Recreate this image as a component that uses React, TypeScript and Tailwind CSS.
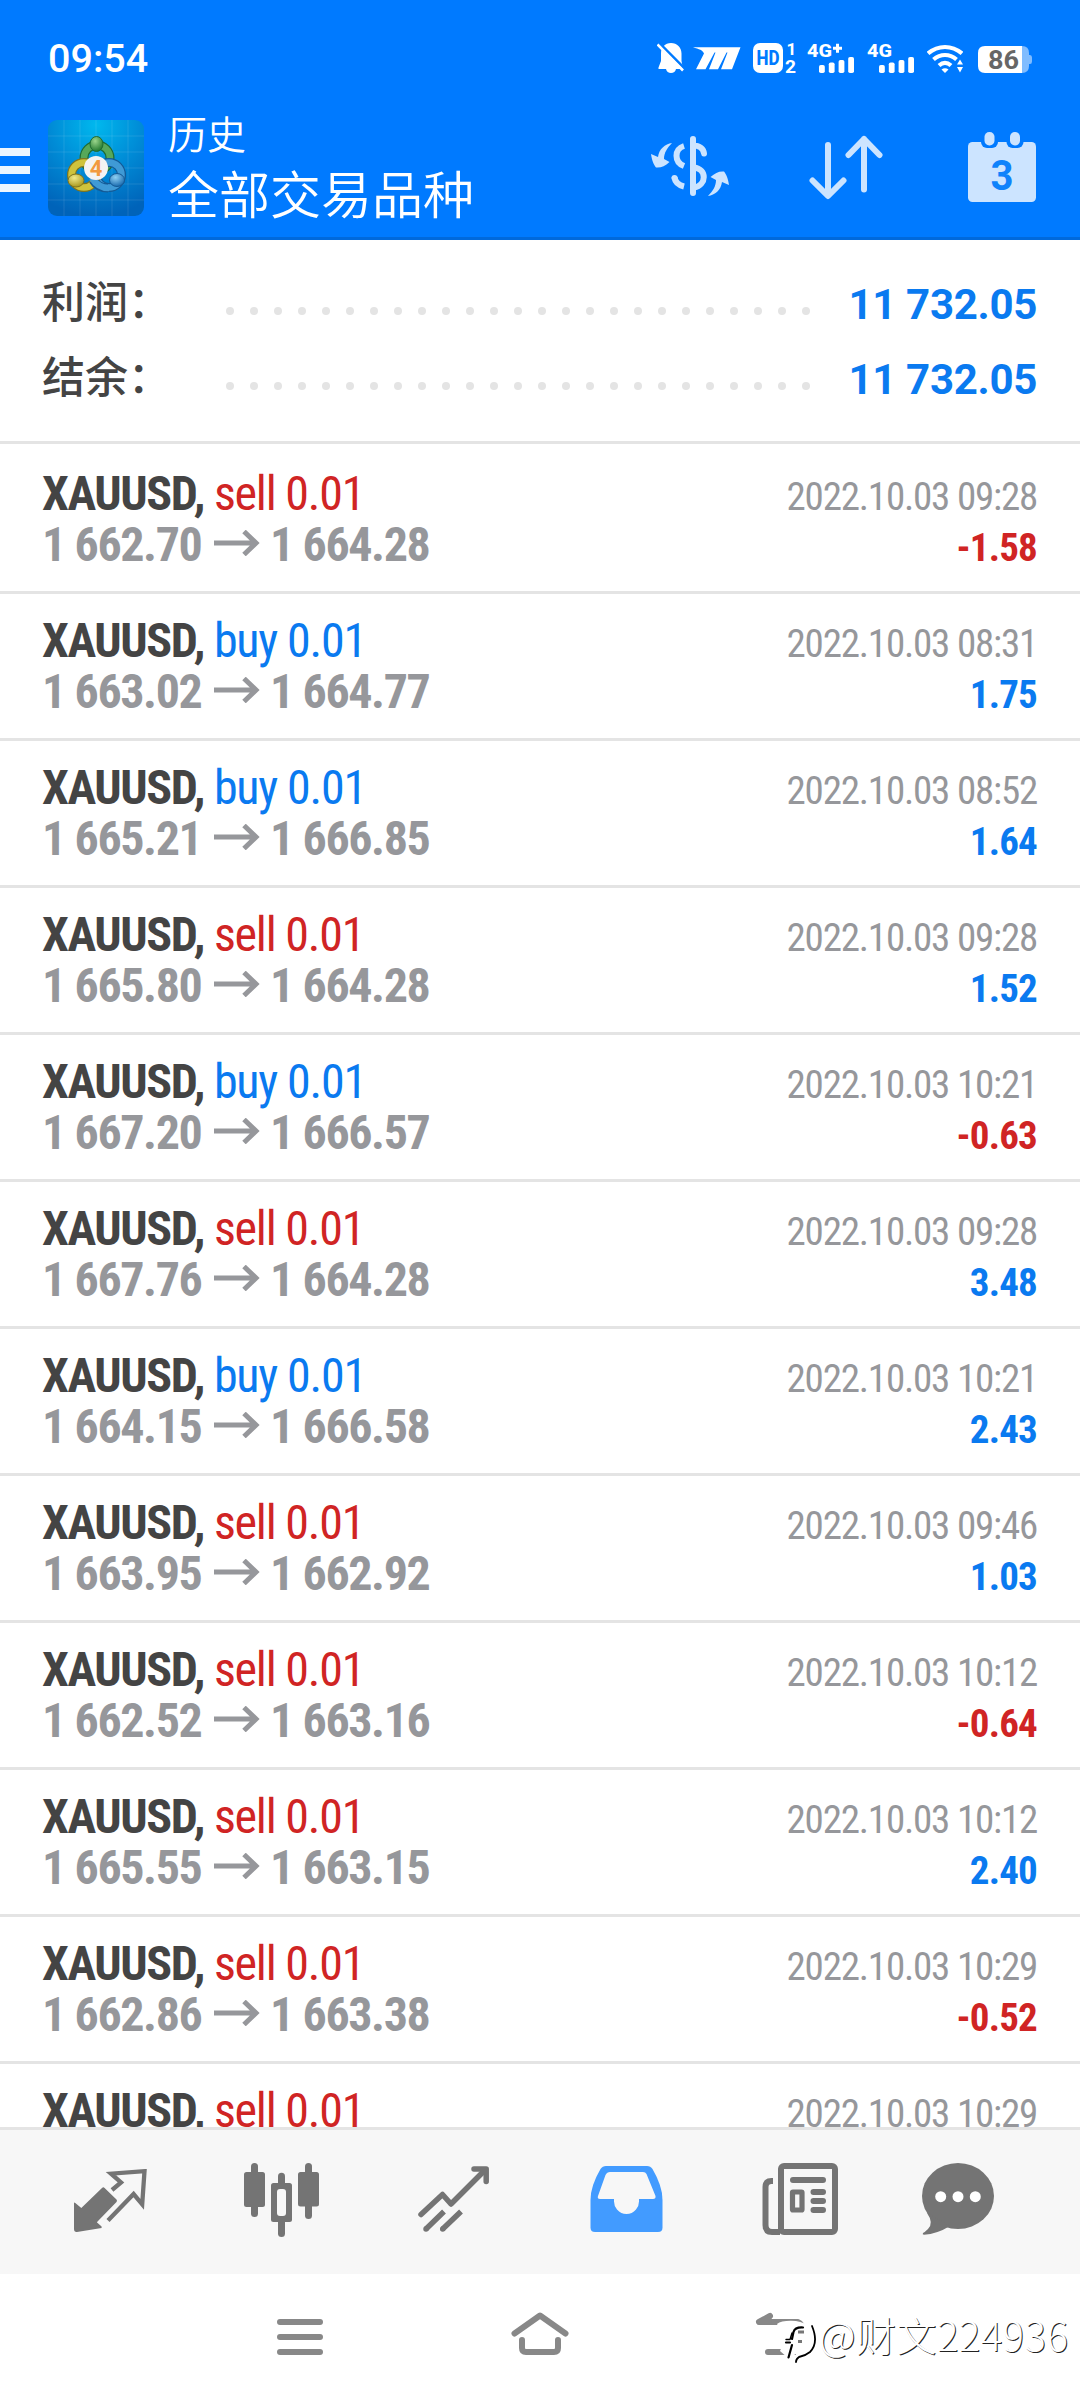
import clsx from "clsx";

type Deal = {
  side: "buy" | "sell";
  open: string;
  close: string;
  time: string;
  profit: string;
};

const DEALS: Deal[] = [
  { side: "sell", open: "1 662.70", close: "1 664.28", time: "2022.10.03 09:28", profit: "-1.58" },
  { side: "buy", open: "1 663.02", close: "1 664.77", time: "2022.10.03 08:31", profit: "1.75" },
  { side: "buy", open: "1 665.21", close: "1 666.85", time: "2022.10.03 08:52", profit: "1.64" },
  { side: "sell", open: "1 665.80", close: "1 664.28", time: "2022.10.03 09:28", profit: "1.52" },
  { side: "buy", open: "1 667.20", close: "1 666.57", time: "2022.10.03 10:21", profit: "-0.63" },
  { side: "sell", open: "1 667.76", close: "1 664.28", time: "2022.10.03 09:28", profit: "3.48" },
  { side: "buy", open: "1 664.15", close: "1 666.58", time: "2022.10.03 10:21", profit: "2.43" },
  { side: "sell", open: "1 663.95", close: "1 662.92", time: "2022.10.03 09:46", profit: "1.03" },
  { side: "sell", open: "1 662.52", close: "1 663.16", time: "2022.10.03 10:12", profit: "-0.64" },
  { side: "sell", open: "1 665.55", close: "1 663.15", time: "2022.10.03 10:12", profit: "2.40" },
  { side: "sell", open: "1 662.86", close: "1 663.38", time: "2022.10.03 10:29", profit: "-0.52" },
  { side: "sell", open: "", close: "", time: "2022.10.03 10:29", profit: "" },
];

function Signal({ label, plus }: { label: string; plus?: boolean }) {
  return (
    <svg className="overflow-visible" width="48" height="30" viewBox="0 0 48 30" fill="white">
      <text x="0" y="14" fontSize="19" fontWeight="800" textLength="25" lengthAdjust="spacingAndGlyphs">
        {label}
      </text>
      {plus && <path d="M26 5.2h9M30.5 .7v9" stroke="white" strokeWidth="3" />}
      <rect x="12" y="22" width="5.8" height="8" rx="1.8" />
      <rect x="21.8" y="19.4" width="5.8" height="10.6" rx="1.8" />
      <rect x="31.6" y="17" width="5.8" height="13" rx="1.8" />
      <rect x="41.2" y="14" width="5.8" height="16" rx="1.8" />
    </svg>
  );
}

function StatusBar() {
  return (
    <div className="flex h-[75px] justify-between pt-[43px] pr-[48px] pl-[48px] text-white">
      <div className="-mt-[6px] text-[39.5px] leading-[44px] font-medium">09:54</div>
      <div className="flex">
        {/* 静音 */}
        <svg width="27" height="30" viewBox="0 0 27 30" fill="white">
          <path d="M14 0C8 0 4 4.5 4 10.5V18L1.5 24.5V26H9C9.5 28.5 11.5 30 14 30S18.500 28.500 19 26H26L24.500 18V10.500C24.500 4.500 20 0 14 0Z" />
          <path d="M-1 -3L30 28" stroke="#007aff" strokeWidth="3" />
          <path d="M.5 1.500L26 27.500" stroke="white" strokeWidth="2.600" />
        </svg>
        <svg className="ml-[9px]" width="48" height="30" viewBox="0 0 48 30" fill="white">
          <path d="M0 4.300H47.500L39 26.300H28L34.500 9.500H33.500L25 26.300H16L22.500 9.500H21.500L12.500 26.300H3L11 10.500C10 7.500 6 6 0 4.300Z" />
        </svg>
        <svg className="ml-[12px] overflow-visible" width="42" height="30" viewBox="0 0 42 30" fill="white">
          <rect width="30" height="30" rx="7" />
          <text x="3.500" y="21.800" fontSize="19.500" fontWeight="800" fill="#007aff" textLength="23" lengthAdjust="spacingAndGlyphs">HD</text>
          <text x="33.500" y="11.700" fontSize="17" fontWeight="700">1</text>
          <text x="32" y="29.800" fontSize="18" fontWeight="700" textLength="11" lengthAdjust="spacingAndGlyphs">2</text>
        </svg>
        <div className="ml-[12px]">
          <Signal label="4G" plus />
        </div>
        <div className="ml-[12px]">
          <Signal label="4G" />
        </div>
        <svg className="ml-[12px]" width="36" height="30" viewBox="0 0 36 30" fill="none" stroke="white" strokeWidth="4.200">
          <path d="M1 10.500C11 1.800 25 1.800 35 10.500" />
          <path d="M6.500 16.500C13.500 10.500 22.500 10.500 29.500 16.500" />
          <path d="M12 22.500C16 19 20 19 24 22.500" />
          <path d="M14.500 26.500Q18 23.800 21.500 26.500L18 30Z" fill="white" stroke="none" />
          <path d="M33 16.500L36 21.500H30ZM33 29.500L36 24H30Z" fill="white" stroke="none" />
        </svg>
        <svg className="ml-[15px]" width="54" height="30" viewBox="0 0 54 30">
          <path d="M43.500 3H44Q51 3 51 10V12H52Q54 12 54 14.500V18.500Q54 21 52 21H51V23Q51 30 44 30H43.500Z" fill="#80bcff" />
          <path d="M44 3H7Q0 3 0 10V23Q0 30 7 30H44Z" fill="white" />
          <text x="10" y="25.600" fontSize="25" fontWeight="700" fill="#666" textLength="31" lengthAdjust="spacingAndGlyphs">86</text>
        </svg>
      </div>
    </div>
  );
}

function AppLogo() {
  return (
    <svg width="96" height="96" viewBox="0 0 96 96">
      <defs>
        <radialGradient id="tile" cx="50%" cy="5%" r="95%">
          <stop offset="0" stopColor="#00b8ee" />
          <stop offset="0.5" stopColor="#008bd6" />
          <stop offset="1" stopColor="#0063b9" />
        </radialGradient>
        <radialGradient id="green" cx="40%" cy="30%" r="70%">
          <stop offset="0" stopColor="#9bd68c" />
          <stop offset="1" stopColor="#23792f" />
        </radialGradient>
        <radialGradient id="yellow" cx="40%" cy="30%" r="70%">
          <stop offset="0" stopColor="#f1ea8a" />
          <stop offset="1" stopColor="#a8981f" />
        </radialGradient>
        <radialGradient id="blue" cx="40%" cy="30%" r="70%">
          <stop offset="0" stopColor="#8fd0f3" />
          <stop offset="1" stopColor="#1b6cb0" />
        </radialGradient>
      </defs>
      <rect width="96" height="96" rx="9" fill="url(#tile)" />
      <path
        d="M16 0V96M32 0V96M48 0V96M64 0V96M80 0V96M0 16H96M0 32H96M0 48H96M0 64H96M0 80H96"
        stroke="white"
        strokeOpacity="0.1"
      />
      <g fill="none">
        <circle cx="49" cy="38" r="13" stroke="#1f6b33" strokeWidth="9" />
        <circle cx="49" cy="38" r="13" stroke="#56a85a" strokeWidth="6.500" />
        <circle cx="61" cy="55" r="12.500" stroke="#145a96" strokeWidth="9" />
        <circle cx="61" cy="55" r="12.500" stroke="#3f9ad6" strokeWidth="6.500" />
        <circle cx="36" cy="55" r="12.500" stroke="#80741c" strokeWidth="9" />
        <circle cx="36" cy="55" r="12.500" stroke="#cfc33c" strokeWidth="6.500" />
        <path d="M45 60Q50 68 60 68" stroke="#145a96" strokeWidth="9" />
        <path d="M44 58Q50 68 61 68" stroke="#3f9ad6" strokeWidth="6.500" />
      </g>
      <ellipse cx="48.500" cy="24" rx="6.500" ry="7.500" fill="url(#green)" stroke="#1f6b33" />
      <ellipse cx="28" cy="60.500" rx="8" ry="6.500" fill="url(#yellow)" stroke="#80741c" />
      <ellipse cx="69" cy="60" rx="7.500" ry="6.500" fill="url(#blue)" stroke="#145a96" />
      <circle cx="48" cy="48" r="12" fill="#f4f3f2" />
      <text x="48" y="56" textAnchor="middle" fontSize="22" fontWeight="700" fill="#f29a3e">4</text>
    </svg>
  );
}

function Header() {
  return (
    <header className="h-[240px] border-b-[3px] border-[#0069dc] bg-[#007aff]">
      <StatusBar />
      <div className="flex text-white">
        <div className="mt-[73px] flex w-[30px] flex-col gap-[10px]">
          <div className="h-[8px] bg-[#edf6ff]" />
          <div className="h-[8px] bg-[#edf6ff]" />
          <div className="h-[8px] bg-[#edf6ff]" />
        </div>
        <div className="mt-[45px] ml-[18px]">
          <AppLogo />
        </div>
        <div className="mt-[33px] ml-[24px] font-['Noto_Sans_CJK_SC',sans-serif] font-[350]">
          <div className="text-[39px] leading-[48px]">历史</div>
          <div className="mt-[6px] text-[51px] leading-[60px]">全部交易品种</div>
        </div>
        <div className="ml-auto flex pr-[44px]">
          <svg className="mt-[45px]" width="110" height="90" viewBox="0 0 110 90" fill="none" stroke="#cce4ff" strokeWidth="6">
            <path d="M53 19V73M53 25.500C60 25.500 63.500 29 64 33.500" strokeLinecap="round" />
            <path d="M54 47.500C67 49 67 65 54 67.500" />
            <path d="M44 26C34 29 34 42 44 46M34.500 57C35 62 38 65 44 66.500" />
            <g fill="#cce4ff" stroke="none">
              <circle cx="34.500" cy="58" r="3" />
              <path d="M32 23C25 24 19 29 18 37L11 34C12 41 14 45 16 47.500C21 48 25 46 29.500 42L24 39C24 33 27 28 32 23Z" />
              <path d="M68 76C75 75 81 70 82 62L89 65C88 58 86 54 84 51.500C79 51 75 53 70.500 57L76 60C76 66 73 71 68 76Z" />
            </g>
          </svg>
          <svg
            className="mt-[60px] ml-[59px]"
            width="74"
            height="66"
            viewBox="0 0 74 66"
            fill="none"
            stroke="#cce4ff"
            strokeWidth="6"
            strokeLinecap="round"
            strokeLinejoin="round"
          >
            <path d="M19 10V60M3.500 45.500L19 61L34.500 45.500" />
            <path d="M55 54.500V4M39.500 20L55 4L70.500 20" />
          </svg>
          <svg className="mt-[57px] ml-[85px]" width="68" height="70" viewBox="0 0 68 70" fill="#cce4ff">
            <rect y="10" width="68" height="60" rx="4.500" />
            <rect x="13" y="4" width="17" height="12" rx="6" fill="#007aff" />
            <rect x="38.500" y="4" width="17" height="12" rx="6" fill="#007aff" />
            <rect x="16.500" width="10" height="13.500" rx="4.800" />
            <rect x="42" width="10" height="13.500" rx="4.800" />
            <text x="22.500" y="57.500" fontSize="43" fontWeight="700" fill="#0f82fb" textLength="23" lengthAdjust="spacingAndGlyphs">3</text>
          </svg>
        </div>
      </div>
    </header>
  );
}

function SummaryRow({ label, value }: { label: string; value: string }) {
  return (
    <div className="flex h-[75px] items-center pr-[43px] pl-[42px]">
      <div className="-mt-[6px] w-[184px] font-['Noto_Sans_CJK_SC',sans-serif] text-[43px] font-medium text-[#444]">{label}</div>
      <div className="mt-[16px] flex gap-[16px]">
        {Array.from({ length: 25 }, (_, i) => (
          <div key={i} className="size-[8px] rounded-full bg-[#e4e4e4]" />
        ))}
      </div>
      <div className="mt-[3px] ml-auto text-[42px] font-bold tracking-[-0.3px] text-[#0a7af0]">{value}</div>
    </div>
  );
}

function DealRow({ deal, first }: { deal: Deal; first: boolean }) {
  const loss = deal.profit.startsWith("-");
  return (
    <div
      className={clsx(
        "shrink-0 border-b-[3px] border-[#e4e4e4] pr-[43px] pl-[42px] tracking-[-1.2px] font-stretch-75%",
        first ? "h-[150px] pt-[24px]" : "h-[147px] pt-[21px]",
      )}
    >
      <div className="flex h-[51px] items-baseline justify-between leading-[51px]">
        <div className="text-[48px]">
          <span className="font-bold tracking-[-1.4px] text-[#444]">XAUUSD,</span>{" "}
          <span className={deal.side === "buy" ? "text-[#0a7af0]" : "text-[#d02424]"}>{deal.side} 0.01</span>
        </div>
        <div className="text-[39px] text-[#96979b]">{deal.time}</div>
      </div>
      <div className="flex h-[51px] items-baseline justify-between leading-[51px] font-bold">
        <div className="flex text-[48px] tracking-[-1.4px] text-[#96979b]">
          <span className="w-[172px]">{deal.open}</span>
          <svg className="mt-[11px]" width="46" height="26" viewBox="0 0 46 26" fill="none" stroke="#96979b" strokeWidth="5">
            <path d="M0 13H42M30 1.500L42 13L30 24.500" />
          </svg>
          <span className="ml-[10px]">{deal.close}</span>
        </div>
        <div className={clsx("text-[39px] tracking-[-0.8px]", loss ? "text-[#d02424]" : "text-[#0a7af0]")}>
          {deal.profit}
        </div>
      </div>
    </div>
  );
}

function TabBar() {
  return (
    <nav className="flex h-[147px] items-start border-t-[3px] border-[#e4e4e4] bg-[#f7f7f7] pl-[74px] text-[#747474]">
      {/* 行情 */}
      <svg className="mt-[39px]" width="73" height="64" viewBox="0 0 73 64" fill="currentColor">
        <path d="M0 34.500Q0 33 1.300 34L7.300 39L28 19Q29.300 17.500 30.600 19L42.500 30.500Q43.500 31.700 42.500 33L22.800 53.300L27.600 57.500V59L3 63Q0 63.300 0 60Z" />
        <path d="M38 21L47 13.500L37 4.700L70.500 2.200L68.200 35.300L59.600 25L34 51.500" fill="none" stroke="currentColor" strokeWidth="4.300" />
      </svg>
      {/* 图表 */}
      <svg className="mt-[33px] ml-[97px]" width="75" height="74" viewBox="0 0 75 74" fill="currentColor">
        <rect y="9" width="21" height="35" rx="2.500" />
        <rect x="7" width="7" height="54" rx="3.500" />
        <rect x="27" y="20" width="21" height="39" rx="2.500" />
        <rect x="34" y="9.700" width="7" height="64.300" rx="3.500" />
        <rect x="33" y="26" width="9" height="27" rx="3" fill="#f7f7f7" />
        <rect x="54" y="9" width="21" height="34.500" rx="2.500" />
        <rect x="61" width="7" height="56" rx="3.500" />
      </svg>
      {/* 交易 */}
      <svg className="mt-[36px] ml-[99px]" width="72" height="67" viewBox="0 0 72 67" fill="none" stroke="currentColor" strokeWidth="5.500" strokeLinejoin="round">
        <path d="M3 48.500L24.500 28.500L33 38L67 4" strokeLinecap="round" />
        <path d="M56 3H68.200V15.500" strokeLinecap="round" />
        <path d="M8 63L26 45.500M24.700 63L43 45.500" />
        <path d="M8 63h.01M24.700 63h.01" strokeLinecap="round" />
      </svg>
      {/* 历史 */}
      <svg className="mt-[36px] ml-[100px]" width="73" height="66" viewBox="0 0 73 66" fill="#429bff">
        <path d="M16 0H57Q60.500 0 62.500 3Q72.500 20 72.500 34V61.500Q72.500 66 68 66H5Q.5 66 .5 61.500V34Q.5 20 10.500 3Q12.500 0 16 0Z" />
        <path
          d="M20 6H53Q55.500 6 56.500 8L65.500 30Q66 33 63 33H49V35.500Q49 40 46 43.500Q42 48 36.500 48T27 43.500Q24 40 24 35.500V33H10Q7 33 8 30L15.500 9Q17 6 20 6Z"
          fill="#f7f7f7"
        />
      </svg>
      {/* 新闻 */}
      <svg className="mt-[33px] ml-[99px]" width="76" height="72" viewBox="0 0 76 72" fill="none" stroke="currentColor" strokeWidth="6">
        <rect x="19" y="3" width="54" height="66" rx="3" />
        <path d="M11 18H9.500Q3.500 18 3.500 24V62Q3.500 69 10 69H18" />
        <path d="M31 17H61M51.500 29H61M51.500 38H61M51.500 47H61" strokeLinecap="round" />
        <rect x="30.500" y="29" width="9.500" height="18" rx="0.500" strokeWidth="5.200" />
      </svg>
      {/* 信箱 */}
      <svg className="mt-[33px] ml-[84px]" width="72" height="72" viewBox="0 0 72 72" fill="currentColor">
        <ellipse cx="36" cy="33" rx="36" ry="33" />
        <path d="M5 50Q12 60 6 66Q3 69 1 70Q0 71.500 2 71.700Q15 71 28 63Z" />
        <g fill="white">
          <circle cx="18.700" cy="33.700" r="5.500" />
          <circle cx="36" cy="33.700" r="5.500" />
          <circle cx="53.300" cy="33.700" r="5.500" />
        </g>
      </svg>
    </nav>
  );
}

function SystemBar() {
  return (
    <div className="relative flex h-[126px] items-start bg-white pl-[277px]">
      <div className="mt-[45px] flex w-[46px] flex-col gap-[9px]">
        <div className="h-[6px] rounded-full bg-[#888]" />
        <div className="h-[6px] rounded-full bg-[#888]" />
        <div className="h-[6px] rounded-full bg-[#888]" />
      </div>
      <svg className="mt-[16px] ml-[177px]" width="80" height="80" viewBox="0 0 80 80" fill="none" stroke="#888" strokeWidth="6" strokeLinecap="round" strokeLinejoin="round">
        <path d="M14.500 43.500L40 25.500L65.500 43.500" />
        <path d="M22 50V58Q22 62 26 62H54Q58 62 58 58V50" />
      </svg>
      <svg className="mt-[16px] ml-[160px]" width="80" height="80" viewBox="0 0 80 80" fill="none" strokeLinecap="round" strokeLinejoin="round">
        <path d="M30 26L19 32H58Q64 34 64 46T56 62H28" stroke="#888" strokeWidth="6" />
        <path d="M29 26L19 32L30 32Z" fill="#888" stroke="#888" strokeWidth="4" />
        <path d="M37 34Q42 30 56 31Q74 34 75 47Q74 66 56 72V64L48 68L40 61Q46 50 37 34Z" fill="white" />
        <path d="M72 36Q79 53 70 62Q65 66 59 67Q56 69 56 72" stroke="black" strokeWidth="1.800" />
        <path d="M63 37.500Q55 37 53.500 42L52 49M46 52.500H50M52 55L48.500 67.500" stroke="black" strokeWidth="2.200" />
        <path d="M46 49.500H50L52 43" stroke="black" strokeWidth="1.400" />
        <path d="M58 42H64M58 51.500H62" stroke="#777" strokeWidth="3" strokeLinecap="butt" />
      </svg>
      {/* 水印 */}
      <div className="absolute top-[32px] left-[819px] font-['Noto_Sans_CJK_SC',sans-serif] text-[40px] leading-[56px] font-light tracking-[0.5px] whitespace-nowrap text-white [text-shadow:1px_1px_0px_#222]">
        @财文224936
      </div>
    </div>
  );
}

export default function App() {
  return (
    <div className="flex h-[2400px] w-[1080px] flex-col overflow-hidden bg-white font-['Roboto',sans-serif]">
      <Header />
      <section className="h-[204px] border-b-[3px] border-[#e4e4e4] pt-[25px]">
        <SummaryRow label="利润：" value="11 732.05" />
        <SummaryRow label="结余：" value="11 732.05" />
      </section>
      <main className="flex h-[1683px] flex-col overflow-hidden">
        {DEALS.map((deal, i) => (
          <DealRow key={i} deal={deal} first={i === 0} />
        ))}
      </main>
      <TabBar />
      <SystemBar />
    </div>
  );
}
